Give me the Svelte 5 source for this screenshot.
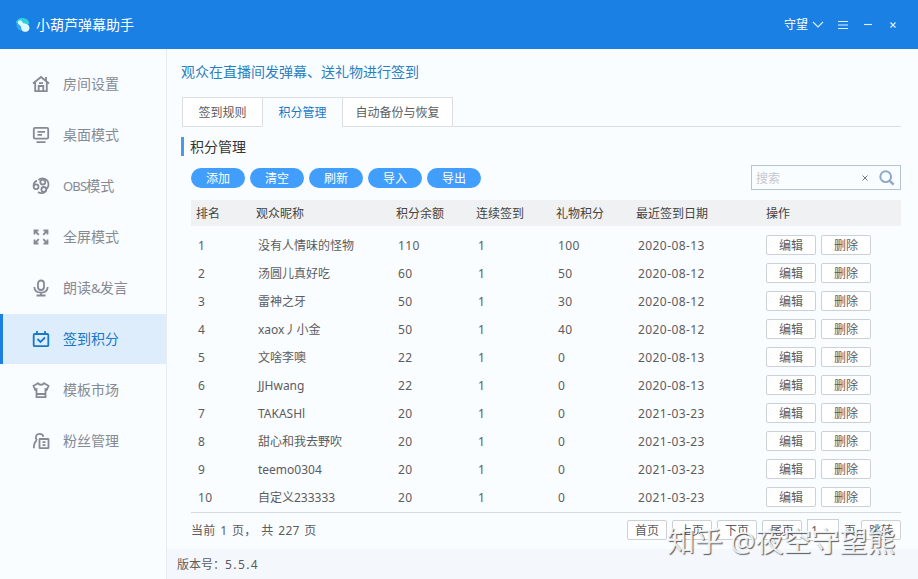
<script lang="ts">
  interface Viewer {
    rank: number;
    name: string;
    points: number;
    streak: number;
    gift: number;
    date: string;
  }

  const menus = [
    { key: "room", label: "房间设置" },
    { key: "desktop", label: "桌面模式" },
    { key: "obs", label: "OBS模式" },
    { key: "full", label: "全屏模式" },
    { key: "voice", label: "朗读&发言" },
    { key: "sign", label: "签到积分" },
    { key: "market", label: "模板市场" },
    { key: "fans", label: "粉丝管理" }
  ];

  const tabs = ["签到规则", "积分管理", "自动备份与恢复"];
  const actions = ["添加", "清空", "刷新", "导入", "导出"];
  const columns = ["排名", "观众昵称", "积分余额", "连续签到", "礼物积分", "最近签到日期", "操作"];

  const viewers: Viewer[] = [
    { rank: 1, name: "没有人情味的怪物", points: 110, streak: 1, gift: 100, date: "2020-08-13" },
    { rank: 2, name: "汤圆儿真好吃", points: 60, streak: 1, gift: 50, date: "2020-08-12" },
    { rank: 3, name: "雷神之牙", points: 50, streak: 1, gift: 30, date: "2020-08-12" },
    { rank: 4, name: "xaox丿小金", points: 50, streak: 1, gift: 40, date: "2020-08-12" },
    { rank: 5, name: "文啥李噢", points: 22, streak: 1, gift: 0, date: "2020-08-13" },
    { rank: 6, name: "JJHwang", points: 22, streak: 1, gift: 0, date: "2020-08-13" },
    { rank: 7, name: "TAKASHl", points: 20, streak: 1, gift: 0, date: "2021-03-23" },
    { rank: 8, name: "甜心和我去野吹", points: 20, streak: 1, gift: 0, date: "2021-03-23" },
    { rank: 9, name: "teemo0304", points: 20, streak: 1, gift: 0, date: "2021-03-23" },
    { rank: 10, name: "自定义233333", points: 20, streak: 1, gift: 0, date: "2021-03-23" }
  ];

  let activeMenu = $state("sign");
  let activeTab = $state("积分管理");
  let keyword = $state("");
  let page = $state("1");

  // 西文字符单独排，字距收紧
  function splitLatin(label: string): string[] {
    return label.split(/([A-Z&]+)/).filter(Boolean);
  }
</script>

<div class="window">
  <header class="titlebar">
    <svg class="logo" viewBox="0 0 16 16">
      <path d="M1 6C1.500 1.500 7 0 11 1.800c2.200 1 3.200 3 3.200 5L9 9z" fill="#2fd0dc" />
      <path d="M1.500 6c-.6 3 1 6.500 4.500 8l3-5z" fill="#2fa9ee" />
      <path d="M3 4.800c.9-1.900 3.700-1.600 4.500.4.300.9 1 1.100 2.300 1.200 3.700.2 5.500 3.300 4.400 6-1.200 2.900-5.600 3.300-7.300.8-1-1.500-.4-3.100-1.300-4.100C4.300 7.700 2.200 6.800 3 4.800z" fill="#dcfaff" />
    </svg>
    <span class="app-name">小葫芦弹幕助手</span>
    <div class="user"><span>守望</span>
      <svg width="12" height="8" viewBox="0 0 12 8"><path d="M1 1l5 5 5-5" /></svg>
    </div>
    <div class="controls">
      <svg viewBox="0 0 12 12"><path d="M1 2.500h10M1 6h10M1 9.500h10" /></svg>
      <svg viewBox="0 0 12 12"><path d="M2 5.500h8" /></svg>
      <svg viewBox="0 0 12 12"><path d="M3.500 3.500l5 5M8.500 3.500l-5 5" /></svg>
    </div>
  </header>

  <div class="body">
    <nav class="sidebar">
      {#each menus as menu}
        <button class="menu" class:active={activeMenu === menu.key} onclick={() => (activeMenu = menu.key)}>
          <svg class="menu-icon" viewBox="0 0 18 18">
            {#if menu.key === "room"}
              <path d="M1 8.500L9 2l8 6.500M3.200 7.500v8.700h11.600V7.500M14 2v3.500" />
              <path d="M6.700 16v-5h4.600v5M7 8.200h4" />
            {:else if menu.key === "desktop"}
              <rect x="1.800" y="1.800" width="14.400" height="10.900" rx="1.200" />
              <path d="M5.500 5.800h7.500M5.500 8.800h4.500M4.500 16.200h9" />
            {:else if menu.key === "obs"}
              <circle cx="10.800" cy="5" r="2.500" />
              <circle cx="4.100" cy="9.800" r="2.400" />
              <circle cx="11.800" cy="12.400" r="2.400" />
              <path d="M6.500 3.200c1.700-2.400 6.500-2.600 8.700.3 1.300 1.700 1.600 3.500 1 5.800-.3 1.100-.9 2-2 3.100M1.700 9.200c-.3-2.600 1-4.700 3.300-5.600M14.200 13.200c-1.500 3.200-5.500 3.700-8.200 1.800" />
            {:else if menu.key === "full"}
              <path d="M6.500 2.500h-4v4M2.500 2.500l4.300 4.300M11.500 2.500h4v4M15.500 2.500l-4.300 4.300M2.500 11.500v4h4M2.500 15.500l4.300-4.300M15.500 11.500v4h-4M15.500 15.500l-4.300-4.300" />
            {:else if menu.key === "voice"}
              <rect x="6" y="1.500" width="6" height="9.500" rx="3" />
              <path d="M2.300 8c.2 3.800 3 5.600 6.700 5.600s6.500-1.800 6.700-5.600M9 13.500v3M4.500 16.500h9" />
            {:else if menu.key === "sign"}
              <rect x="1.700" y="4" width="14.600" height="12.200" rx="1" />
              <path d="M5 1v3M13 1v3M5.500 9l3 3 4.500-4.500" />
            {:else if menu.key === "market"}
              <path d="M6 2.300L1.500 4.800l1.700 4 1.300-.6v8h9v-8l1.300.6 1.700-4L12 2.300c-1.200 1.900-4.800 1.900-6 0zM4.500 13h9" />
            {:else}
              <path d="M4.800 8.300C2.500 4.500 4.700 1.800 7.600 1.800c2 0 3.500 1.100 3.900 2.900M4.800 8.300c-1.900 1.400-3 4-3 7.900" />
              <rect x="7.500" y="7" width="9" height="9.200" rx=".5" />
              <path d="M10.500 10.200h3M10.500 13.200h3" />
            {/if}
          </svg>
          <span class="menu-label">{#each splitLatin(menu.label) as part}<span class:latin={/^[A-Z&]/.test(part)}>{part}</span>{/each}</span>
        </button>
      {/each}
    </nav>

    <main class="main">
      <div class="content">
        <p class="notice">观众在直播间发弹幕、送礼物进行签到</p>

        <div class="tabs">
          {#each tabs as tab}
            <button class="tab" class:active={activeTab === tab} onclick={() => (activeTab = tab)}>{tab}</button>
          {/each}
        </div>

        <h2 class="section-title">积分管理</h2>

        <div class="toolbar">
          {#each actions as action}
            <button class="pill">{action}</button>
          {/each}
          <div class="search">
            <input type="text" placeholder="搜索" bind:value={keyword} />
            <button class="clear" aria-label="清除" onclick={() => (keyword = "")}>
              <svg width="6" height="6" viewBox="0 0 6 6"><path d="M.5.5l5 5M5.500.5l-5 5" stroke="#777" /></svg>
            </button>
            <svg width="16" height="16" viewBox="0 0 16 16">
              <circle cx="6.700" cy="6.700" r="5.400" fill="none" stroke="#8fa9cb" stroke-width="2" />
              <path d="M10.800 10.800l3.800 3.800" stroke="#8fa9cb" stroke-width="2.500" />
            </svg>
          </div>
        </div>

        <div class="row head">
          {#each columns as column}
            <span>{column}</span>
          {/each}
        </div>
        <div class="rows">
          {#each viewers as viewer (viewer.rank)}
            <div class="row">
              <span class="num">{viewer.rank}</span>
              <span>{viewer.name}</span>
              <span class="num">{viewer.points}</span>
              <span class="num">{viewer.streak}</span>
              <span class="num">{viewer.gift}</span>
              <span class="num">{viewer.date}</span>
              <div class="ops">
                <button class="btn">编辑</button>
                <button class="btn">删除</button>
              </div>
            </div>
          {/each}
        </div>

        <div class="pager">
          <span class="summary">当前 1 页， 共 227 页</span>
          <button class="btn">首页</button>
          <button class="btn">上页</button>
          <button class="btn">下页</button>
          <button class="btn">尾页</button>
          <input class="page-input" type="text" bind:value={page} />
          <span class="unit">页</span>
          <button class="btn">跳转</button>
        </div>
      </div>

      <footer class="version">版本号：<span>5.5.4</span></footer>
    </main>
  </div>

  <div class="watermark">知乎 @夜空守望熊</div>
</div>

<style>
  :global(body) {
    overflow: hidden;
  }

  .window {
    position: relative;
    display: flex;
    flex-direction: column;
    width: 918px;
    height: 579px;
    background: #fafdff;
    color: #5a5c60;
    font-family: "Noto Sans", "Noto Sans CJK SC", sans-serif;
    font-size: 12px;
    line-height: 18px;
  }

  button,
  input {
    box-sizing: border-box;
    margin: 0;
    padding: 0;
    border: none;
    outline: none;
    background: none;
    color: inherit;
    font: inherit;
  }

  .titlebar {
    display: flex;
    align-items: center;
    flex: none;
    box-sizing: border-box;
    height: 49px;
    padding: 0 19px 0 15px;
    background: #1b80e4;
    color: #fff;
  }

  .titlebar svg {
    fill: none;
    stroke: #dff0ff;
    stroke-width: 1.1;
  }

  .titlebar .logo {
    width: 16px;
    height: 16px;
    stroke: none;
  }

  .app-name {
    padding-top: 1px;
    margin-left: 5px;
    font-size: 14px;
  }

  .user {
    display: flex;
    align-items: center;
    gap: 4px;
    margin-left: auto;
  }

  .user span {
    padding-top: 1px;
  }

  .controls {
    display: flex;
    gap: 13px;
    margin-left: 13px;
  }

  .controls svg {
    width: 12px;
    height: 12px;
  }

  .body {
    display: flex;
    flex: 1;
    min-height: 0;
  }

  .sidebar {
    display: flex;
    flex-direction: column;
    gap: 1px;
    box-sizing: border-box;
    width: 167px;
    padding-top: 10px;
    border-right: 1px solid #e6ecf2;
  }

  .menu {
    display: flex;
    align-items: center;
    gap: 13px;
    height: 50px;
    padding-left: 29px;
    border-left: 3px solid transparent;
    color: #858a94;
    font-size: 14px;
  }

  .menu.active {
    border-left-color: #1b80e4;
    background: #deedfc;
    color: #1878c8;
  }

  .menu-icon {
    width: 18px;
    height: 18px;
    fill: none;
    stroke: currentColor;
    stroke-width: 1.8;
  }

  .latin {
    font-size: 13px;
    letter-spacing: -0.8px;
  }

  .main {
    display: flex;
    flex: 1;
    flex-direction: column;
    min-width: 0;
  }

  .content {
    flex: 1;
    padding: 13px 17px 0 14px;
  }

  .notice {
    margin: 0;
    color: #2a7fbf;
    font-size: 14px;
    line-height: 20px;
  }

  .tabs {
    display: flex;
    height: 30px;
    margin: 15px 0 0 1px;
    box-shadow: inset 0 -1px #dcdfe2;
  }

  .tab {
    width: 80px;
    padding-top: 2px;
    border: 1px solid #dcdfe2;
    border-right: none;
    background: #fff;
  }

  .tab:last-child {
    width: 111px;
    border-right: 1px solid #dcdfe2;
  }

  .tab.active {
    border-bottom-color: #fafdff;
    background: #fafdff;
    color: #1878c8;
  }

  .section-title {
    height: 19px;
    margin: 10px 0 0;
    padding-left: 6px;
    border-left: 3px solid #4a9be2;
    color: #333;
    font-size: 14px;
    font-weight: 400;
    line-height: 19px;
  }

  .toolbar {
    display: flex;
    align-items: center;
    gap: 5px;
    height: 25px;
    margin: 9px 0 0 10px;
  }

  .pill {
    width: 54px;
    height: 20px;
    padding-top: 1px;
    border-radius: 10px;
    background: #419efc;
    color: #fff;
    line-height: 19px;
  }

  .search {
    display: flex;
    align-items: center;
    box-sizing: border-box;
    width: 150px;
    height: 25px;
    margin-left: auto;
    padding: 0 5px 0 4px;
    border: 1px solid #b5c3d3;
  }

  .search input {
    flex: 1;
    min-width: 0;
    padding-top: 2px;
  }

  .search input::placeholder {
    color: #c5c8cc;
  }

  .clear {
    display: flex;
    margin-right: 11px;
  }

  .row {
    display: grid;
    grid-template-columns: 60px 140px 80px 80px 80px 128px 1fr;
    align-items: center;
    height: 28px;
    margin-left: 10px;
    padding-left: 7px;
  }

  .row > span {
    padding-top: 2px;
  }

  .row.head {
    grid-template-columns: 60px 140px 80px 80px 80px 130px 1fr;
    height: 26px;
    margin-top: 10px;
    padding-left: 5px;
    background: #f0f1f2;
    color: #444;
  }

  .rows {
    padding-top: 5px;
  }

  .num {
    letter-spacing: 0.42px;
  }

  .ops {
    display: flex;
    gap: 5px;
  }

  .btn {
    width: 50px;
    height: 20px;
    padding-top: 1px;
    border: 1px solid #ccd1d6;
    border-radius: 2px;
    background: #fff;
    line-height: 17px;
  }

  .pager {
    display: flex;
    align-items: center;
    gap: 5px;
    height: 34px;
    margin: 1px 0 0 10px;
    border-top: 1px solid #d5d8dc;
  }

  .summary {
    margin-right: auto;
    padding-top: 2px;
    white-space: pre;
    word-spacing: 1.5px;
    letter-spacing: 0.2px;
  }

  .unit {
    padding-top: 2px;
  }

  .pager .btn {
    width: 40px;
  }

  .page-input {
    width: 32px;
    height: 22px;
    padding: 1px 0 0 3px;
    border: 1px solid #ccd1d6;
    background: #fff;
  }

  .version {
    height: 30px;
    padding-left: 10px;
    background: #f4f7fb;
    line-height: 32px;
  }

  .version span {
    letter-spacing: 1.4px;
  }

  .watermark {
    position: absolute;
    top: 523px;
    left: 667px;
    color: rgba(250, 252, 254, 0.9);
    font-size: 28px;
    line-height: 37px;
    white-space: nowrap;
    text-shadow: 1px 1px 1px rgba(70, 75, 80, 0.9);
    pointer-events: none;
  }
</style>
